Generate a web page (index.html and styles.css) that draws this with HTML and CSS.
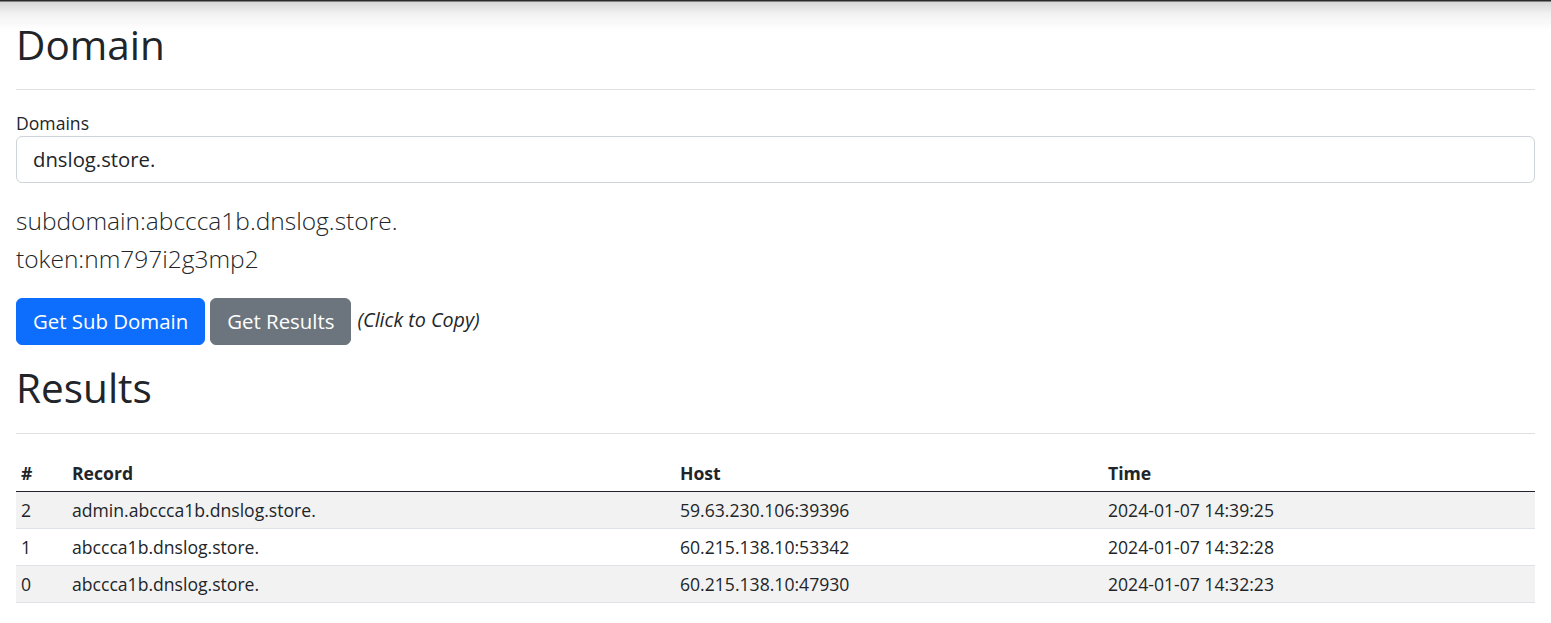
FILE: index.html
```html
<!DOCTYPE html>
<html lang="en">
<head>
<meta charset="utf-8">
<title>DNSLog</title>
<link rel="stylesheet" href="styles.css">
</head>
<body>
<div class="topshade"></div>
<main class="page">
  <h1 class="title title-domain">Domain</h1>
  <div class="rule"></div>
  <label class="label" for="domains">Domains</label>
  <input class="input" id="domains" type="text" value="dnslog.store.">
  <div class="info">
    <p class="lead">subdomain:abccca1b.dnslog.store.</p>
    <p class="lead">token:nm797i2g3mp2</p>
  </div>
  <div class="actions">
    <button class="btn btn-primary" type="button">Get Sub Domain</button>
    <button class="btn btn-secondary" type="button">Get Results</button>
    <em class="hint">(Click to Copy)</em>
  </div>
  <h1 class="title title-results">Results</h1>
  <div class="rule"></div>
  <table class="table">
    <colgroup>
      <col class="c-num">
      <col class="c-record">
      <col class="c-host">
      <col class="c-time">
    </colgroup>
    <thead>
      <tr><th>#</th><th>Record</th><th>Host</th><th>Time</th></tr>
    </thead>
    <tbody>
      <tr class="odd"><td>2</td><td>admin.abccca1b.dnslog.store.</td><td>59.63.230.106:39396</td><td>2024-01-07 14:39:25</td></tr>
      <tr><td>1</td><td>abccca1b.dnslog.store.</td><td>60.215.138.10:53342</td><td>2024-01-07 14:32:28</td></tr>
      <tr class="odd"><td>0</td><td>abccca1b.dnslog.store.</td><td>60.215.138.10:47930</td><td>2024-01-07 14:32:23</td></tr>
    </tbody>
  </table>
</main>
</body>
</html>
```
FILE: styles.css
```css
html, body {
  margin: 0;
  padding: 0;
  background: #fff;
}
body {
  font-family: "Open Sans", "Noto Sans", sans-serif;
  font-size: 17.6px;
  line-height: 1.5;
  color: #212529;
}
.topshade {
  position: fixed;
  top: 0;
  left: 0;
  right: 0;
  height: 30px;
  background: linear-gradient(to bottom, #2a2a2a 0, #2a2a2a 1px, #d8d8d8 2px, #f2f2f2 14px, rgba(255,255,255,0) 30px);
  pointer-events: none;
}
.page {
  padding: 0 16px;
  display: flex;
  flex-direction: column;
  align-items: stretch;
}
.title {
  margin: 0;
  font-size: 40.5px;
  font-weight: 400;
  line-height: 52.8px;
}
.title-domain { margin-top: 19px; }
.title-results { margin-top: 17px; }
.rule {
  margin-top: 17px;
  border-top: 1px solid #dedfe0;
}
.title-results + .rule { margin-top: 18px; }
.label {
  display: block;
  margin-top: 20px;
  line-height: 26px;
}
.input {
  box-sizing: border-box;
  height: 47px;
  margin: 0;
  padding: 0 16px;
  font-family: inherit;
  font-size: 20.3px;
  color: #212529;
  border: 1px solid #ced4da;
  border-radius: 6px;
  background: #fff;
  outline: none;
}
.info {
  margin-top: 19px;
  display: flex;
  flex-direction: column;
}
.lead {
  margin: 0;
  font-size: 24.5px;
  font-weight: 300;
  line-height: 38px;
}
.actions {
  margin-top: 20px;
  display: flex;
  align-items: center;
  gap: 5px;
}
.btn {
  box-sizing: border-box;
  height: 47px;
  padding: 0 16px;
  font-family: inherit;
  font-size: 20.4px;
  line-height: 45px;
  color: #fff;
  border: 1px solid transparent;
  border-radius: 6px;
}
.btn-primary { background: #0d6efd; border-color: #0d6efd; }
.btn-secondary { background: #6c757d; border-color: #6c757d; }
.hint {
  margin-left: 1px;
  margin-top: -4px;
  font-size: 19.7px;
  font-style: italic;
}
.table {
  margin-top: 21px;
  width: 100%;
  border-collapse: collapse;
  table-layout: fixed;
}
.c-num { width: 51px; }
.c-record { width: 608px; }
.c-host { width: 428px; }
.table th, .table td {
  height: 36px;
  box-sizing: content-box;
  padding: 0 5px;
  line-height: 24px;
  text-align: left;
  vertical-align: middle;
  border-bottom: 1px solid #dee2e6;
}
.table th {
  font-weight: 700;
  border-bottom: 1px solid #212529;
}
.table tr.odd td { background: #f2f2f2; }
```
